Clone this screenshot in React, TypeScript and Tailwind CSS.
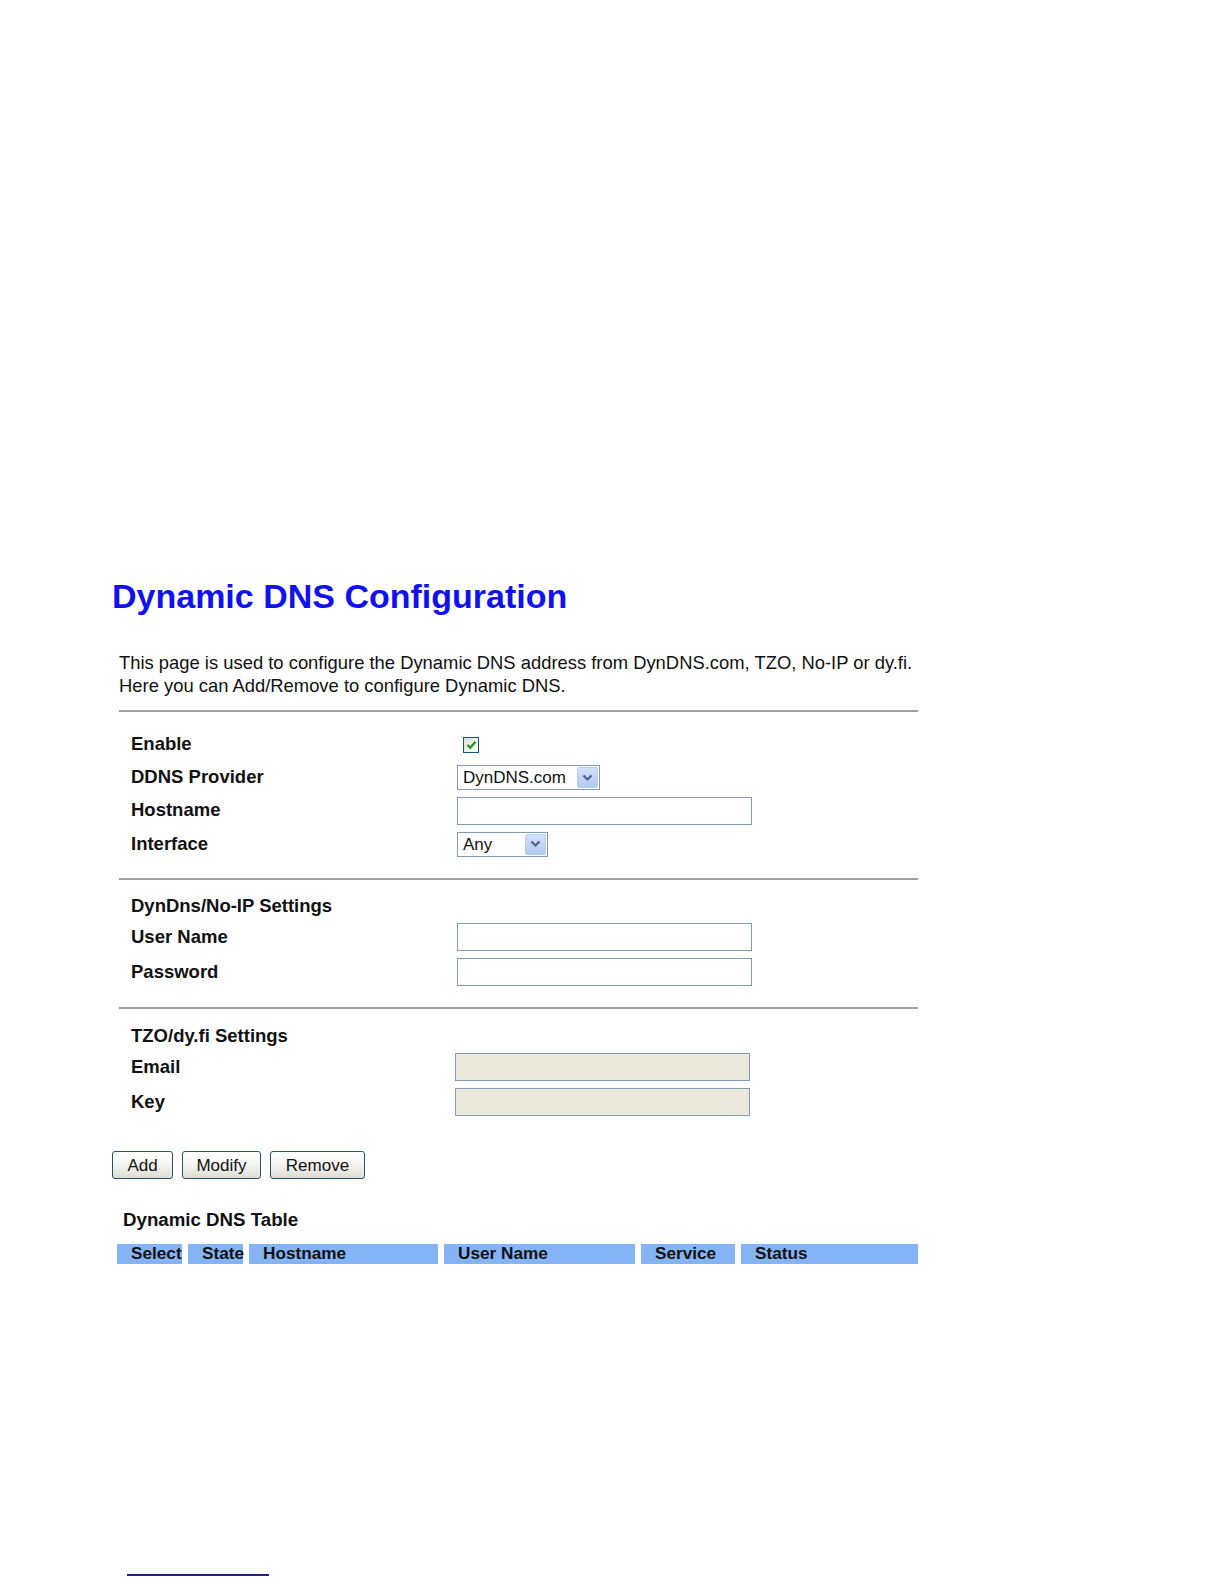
import React from "react";

type Row = { label: string; control?: React.ReactNode; h: string; heading?: boolean };

function TextBox({ disabled }: { disabled?: boolean }) {
  return (
    <div
      className={
        "h-[28px] w-[295px] border border-[#7f9db9] " +
        (disabled ? "bg-[#ebe9dc] -ml-[2px]" : "bg-white")
      }
    />
  );
}

function Select({ value, width }: { value: string; width: string }) {
  return (
    <div className={`relative flex h-[25px] items-center border border-[#7f9db9] bg-white pl-[5px] text-[17px] ${width}`}>
      <span className="leading-none text-[#111]">{value}</span>
      {/* dropdown arrow */}
      <span className="absolute right-[1px] top-[1px] flex h-[21px] w-[21px] items-center justify-center rounded-[2px] border border-[#b9cbf3] bg-gradient-to-b from-[#d4e0fb] to-[#b4c8f4]">
        <svg width="11" height="8" viewBox="0 0 11 8">
          <path d="M1.5 1.5 L5.5 5.5 L9.5 1.5" fill="none" stroke="#4d6185" strokeWidth="2.2" />
        </svg>
      </span>
    </div>
  );
}

function Checkbox() {
  return (
    <div className="ml-[6px] flex h-[16px] w-[16px] items-center justify-center border border-[#1c5180] bg-gradient-to-br from-[#dcdcd7] to-white">
      <svg width="11" height="10" viewBox="0 0 11 10">
        <path d="M1.5 5 L4.3 7.8 L9.5 1.8" fill="none" stroke="#21a121" strokeWidth="2.4" />
      </svg>
    </div>
  );
}

function FormRow({ label, control, h, heading }: Row) {
  return (
    <div className={`flex items-center ${h}`}>
      <div className="w-[338px] pl-[12px] text-[18.5px] font-bold leading-none text-[#111]">{label}</div>
      {!heading && <div className="flex items-center">{control}</div>}
    </div>
  );
}

function Button({ label, w }: { label: string; w: string }) {
  return (
    <button
      className={`flex h-[28px] items-center justify-center rounded-[3px] border border-[#2c4f74] bg-gradient-to-b from-white via-[#f4f4f0] to-[#dcdcd4] text-[17px] leading-none text-[#111] ${w}`}
    >
      {label}
    </button>
  );
}

const columns = [
  { name: "Select", w: "w-[65px]" },
  { name: "State", w: "w-[55px]" },
  { name: "Hostname", w: "w-[189px]" },
  { name: "User Name", w: "w-[191px]" },
  { name: "Service", w: "w-[94px]" },
  { name: "Status", w: "w-[177px]" },
];

export default function App() {
  return (
    <div className="min-h-[1584px] bg-white px-[112px] pt-[579px] font-['Liberation_Sans',Arial,sans-serif]">
      <h1 className="text-[34px] font-bold leading-none text-[#1111ee]">Dynamic DNS Configuration</h1>

      <p className="ml-[7px] mt-[38px] text-[18.4px] leading-[23px] text-[#111]">
        This page is used to configure the Dynamic DNS address from DynDNS.com, TZO, No-IP or dy.fi.
        <br />
        Here you can Add/Remove to configure Dynamic DNS.
      </p>

      <div className="ml-[7px] w-[799px]">
        <hr className="mt-[13px] border-0 border-t-2 border-[#a0a0a0]" />
        <div className="mt-[16px]">
          <FormRow label="Enable" h="h-[33px]" control={<Checkbox />} />
          <FormRow label="DDNS Provider" h="h-[33px]" control={<Select value="DynDNS.com" width="w-[143px]" />} />
          <FormRow label="Hostname" h="h-[33px]" control={<TextBox />} />
          <FormRow label="Interface" h="h-[34px]" control={<Select value="Any" width="w-[91px]" />} />
        </div>

        <hr className="mt-[17px] border-0 border-t-2 border-[#a0a0a0]" />
        <div className="mt-[11px]">
          <FormRow label="DynDns/No-IP Settings" h="h-[30px]" heading />
          <FormRow label="User Name" h="h-[32px]" control={<TextBox />} />
          <FormRow label="Password" h="h-[38px]" control={<TextBox />} />
        </div>

        <hr className="mt-[16px] border-0 border-t-2 border-[#a0a0a0]" />
        <div className="mt-[12px]">
          <FormRow label="TZO/dy.fi Settings" h="h-[30px]" heading />
          <FormRow label="Email" h="h-[32px]" control={<TextBox disabled />} />
          <FormRow label="Key" h="h-[38px]" control={<TextBox disabled />} />
        </div>
      </div>

      <div className="mt-[30px] flex gap-[9px]">
        <Button label="Add" w="w-[61px]" />
        <Button label="Modify" w="w-[79px]" />
        <Button label="Remove" w="w-[95px]" />
      </div>

      <div className="ml-[11px] mt-[29px] flex h-[24px] items-center text-[18.7px] font-bold leading-none text-[#111]">
        Dynamic DNS Table
      </div>

      <div className="ml-[5px] mt-[12px] flex gap-[6px]">
        {columns.map((c) => (
          <div
            key={c.name}
            className={`flex h-[20px] items-center whitespace-nowrap bg-[#84b3f6] pl-[14px] text-[17.2px] font-bold leading-none text-[#111] ${c.w}`}
          >
            {c.name}
          </div>
        ))}
      </div>

      <div className="ml-[15px] mt-[310px] h-[2px] w-[142px] bg-[#1f1f8f]" />
    </div>
  );
}
